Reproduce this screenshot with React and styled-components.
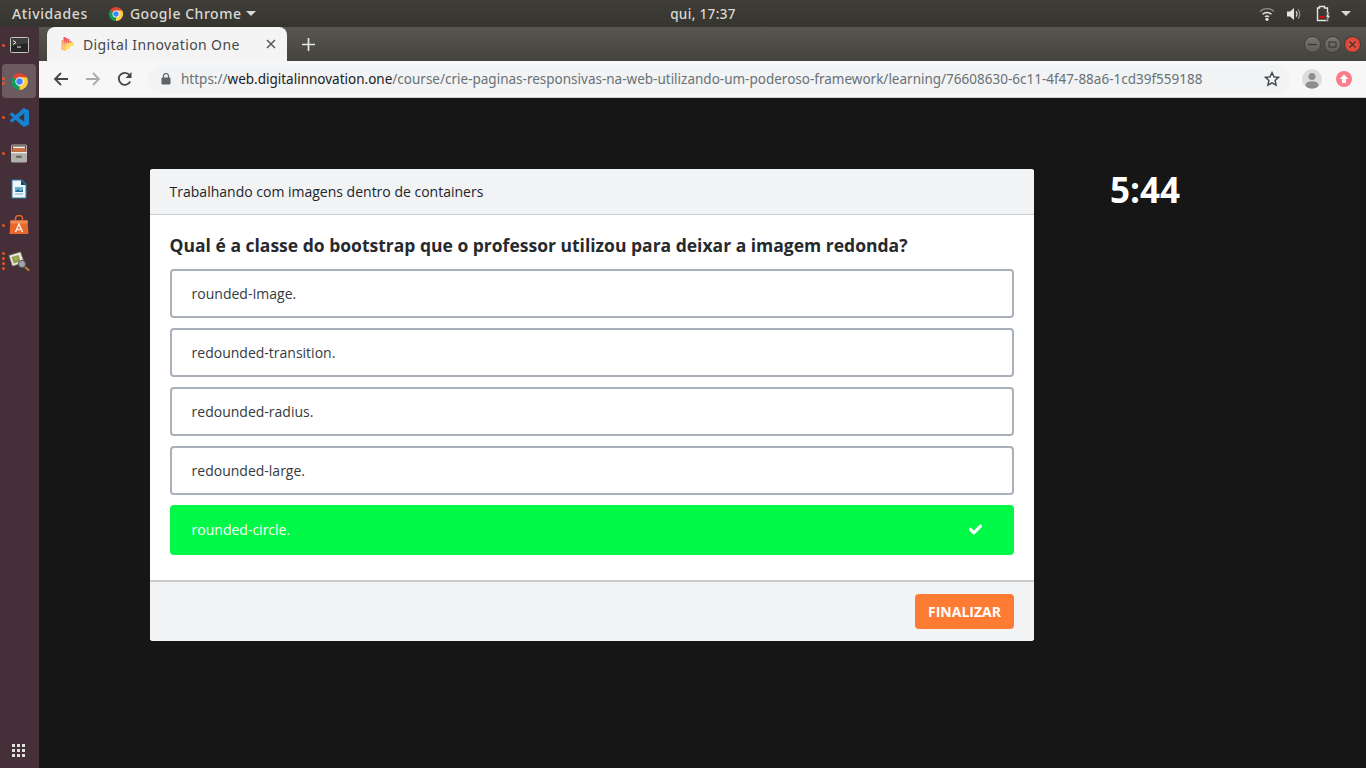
import React from "react";
import styled, { createGlobalStyle } from "styled-components";
import { FaCheck } from "react-icons/fa";

const GlobalStyle = createGlobalStyle`
  html, body {
    margin: 0;
    padding: 0;
    width: 1366px;
    height: 768px;
    overflow: hidden;
    background: #161616;
  }
  * { box-sizing: border-box; }
`;

const Screen = styled.div`
  width: 1366px;
  height: 768px;
  display: flex;
  flex-direction: column;
  font-family: "Open Sans", "Noto Sans", sans-serif;
`;

const TopBar = styled.div`
  height: 27px;
  flex: none;
  display: flex;
  align-items: center;
  background: linear-gradient(#3f3e38, #35342f);
  color: #d9d8d3;
  font-family: "Noto Sans", "Open Sans", sans-serif;
  font-size: 14px;
  font-weight: 500;
  letter-spacing: 0.62px;
  padding: 0 15px 0 12px;
`;

const TopLeft = styled.div`
  width: 651px;
  flex: none;
  display: flex;
  align-items: center;
`;

const AppMenu = styled.div`
  display: flex;
  align-items: center;
  gap: 6px;
  margin-left: 20px;
  letter-spacing: 0.55px;
`;

const Clock = styled.div`
  width: 80px;
  text-align: center;
  font-size: 13.5px;
  letter-spacing: 0.35px;
`;

const TopRight = styled.div`
  flex: 1;
  display: flex;
  align-items: center;
  justify-content: flex-end;
`;

const TrayItem = styled.div`
  display: flex;
  margin-left: ${(p) => p.$gap}px;
`;

const Caret = styled.span`
  display: block;
  width: 0;
  height: 0;
  border-left: 5px solid transparent;
  border-right: 5px solid transparent;
  border-top: 5px solid #d9d8d3;
  margin-left: ${(p) => p.$left || 0}px;
`;

const Body = styled.div`
  flex: 1;
  display: flex;
  min-height: 0;
`;

const Dock = styled.div`
  width: 39px;
  flex: none;
  display: flex;
  flex-direction: column;
  align-items: flex-start;
  background: #45303a;
  padding: 1px 0 0 2px;
`;

const DockItem = styled.div`
  position: relative;
  width: 34px;
  height: 34px;
  margin-bottom: 2px;
  border-radius: 4px;
  display: flex;
  align-items: center;
  justify-content: center;
  background: ${(p) => (p.$active ? "#6b5a5f" : "transparent")};
`;

const Pips = styled.div`
  position: absolute;
  left: 0;
  top: 0;
  bottom: 0;
  display: flex;
  flex-direction: column;
  justify-content: center;
  gap: 2px;
`;

const Pip = styled.span`
  width: 3px;
  height: 3px;
  border-radius: 50%;
  background: #e9541f;
`;

const GridButton = styled.div`
  margin-top: auto;
  margin-bottom: 11px;
  margin-left: 10px;
  display: grid;
  grid-template-columns: repeat(3, 3px);
  gap: 2px;
`;

const GridDot = styled.span`
  width: 3px;
  height: 3px;
  background: #e4e0e0;
`;

const Browser = styled.div`
  flex: 1;
  display: flex;
  flex-direction: column;
  min-width: 0;
`;

const TabStrip = styled.div`
  height: 34px;
  flex: none;
  display: flex;
  align-items: flex-end;
  background: linear-gradient(#575650, #44433d);
  padding: 0 5px 0 8px;
`;

const Tab = styled.div`
  width: 240px;
  height: 34px;
  display: flex;
  align-items: center;
  background: #f4f4f4;
  border-radius: 8px 8px 0 0;
  padding: 0 11px 0 13px;
  color: #45474b;
  font-family: "Noto Sans", sans-serif;
  font-size: 14px;
`;

const TabTitle = styled.span`
  flex: 1;
  margin-left: 8px;
  letter-spacing: 0.38px;
`;

const NewTab = styled.div`
  margin: 0 0 0 15px;
  height: 34px;
  display: flex;
  align-items: center;
`;

const WindowButtons = styled.div`
  margin-left: auto;
  height: 34px;
  display: flex;
  align-items: center;
  gap: 3px;
`;

const WindowButton = styled.div`
  width: 17px;
  height: 17px;
  border-radius: 50%;
  display: flex;
  align-items: center;
  justify-content: center;
  background: ${(p) => (p.$close ? "radial-gradient(circle, #e8594a, #d9382b)" : "linear-gradient(#77766f, #5d5c56)")};
  border: 1px solid #3d3c37;
`;

const Toolbar = styled.div`
  height: 37px;
  flex: none;
  display: flex;
  align-items: center;
  background: #f7f7f7;
  border-bottom: 1px solid #cfcfcf;
  padding: 0 14px 0 14px;
`;

const NavIcon = styled.div`
  width: 16px;
  height: 16px;
  margin-right: ${(p) => p.$gap || 16}px;
  display: flex;
`;

const Omnibox = styled.div`
  width: 1142px;
  height: 29px;
  flex: none;
  display: flex;
  align-items: center;
  background: #f1f3f4;
  border-radius: 14px;
  padding: 0 10px 0 13px;
  font-family: "Noto Sans", sans-serif;
  font-size: 13.5px;
  color: #6a7176;
  white-space: nowrap;
`;

const Url = styled.div`
  flex: 1;
  margin-left: 10px;
`;

const Host = styled.span`
  color: #202124;
`;

const Profile = styled.div`
  width: 20px;
  height: 20px;
  margin-left: 12px;
  border-radius: 50%;
  background: #dcdcdc;
  overflow: hidden;
  display: flex;
`;

const UpdateBadge = styled.div`
  width: 16px;
  height: 16px;
  margin-left: 14px;
  border-radius: 50%;
  background: #fb7c8a;
  display: flex;
  align-items: center;
  justify-content: center;
`;

const Page = styled.div`
  flex: 1;
  display: flex;
  align-items: flex-start;
  background: #161616;
  padding: 71px 0 0 111px;
`;

const Card = styled.div`
  width: 884px;
  height: 472px;
  display: flex;
  flex-direction: column;
  background: #fff;
  border-radius: 3px;
  overflow: hidden;
`;

const CardHeader = styled.div`
  height: 46px;
  flex: none;
  display: flex;
  align-items: center;
  background: #f2f3f5;
  border-bottom: 1px solid #c9ced4;
  padding: 0 20px 0 19.6px;
  color: #212529;
  font-size: 14px;
`;

const CardBody = styled.div`
  flex: 1;
  padding: 18px 20px 0;
`;

const Question = styled.div`
  color: #262a2e;
  font-size: 17.5px;
  font-weight: 700;
  line-height: 24px;
  margin-bottom: 12px;
  margin-left: -0.4px;
`;

const Options = styled.div`
  display: flex;
  flex-direction: column;
  gap: 10px;
`;

const Option = styled.div`
  height: ${(p) => (p.$selected ? 50 : 49)}px;
  display: flex;
  align-items: center;
  justify-content: space-between;
  border: 2px solid ${(p) => (p.$selected ? "#00f947" : "#a8b0b9")};
  border-radius: 4px;
  background: ${(p) => (p.$selected ? "#00f947" : "#fff")};
  color: ${(p) => (p.$selected ? "#fff" : "#343a40")};
  padding: 0 30px ${(p) => (p.$selected ? 2 : 0)}px 19.6px;
  font-size: 14px;
`;

const CardFooter = styled.div`
  height: 61px;
  flex: none;
  display: flex;
  align-items: center;
  justify-content: flex-end;
  background: #f2f3f5;
  border-top: 2px solid #c9cccf;
  padding: 0 20px;
`;

const FinishButton = styled.button`
  width: 99px;
  height: 35px;
  border: none;
  border-radius: 4px;
  background: #fe7b34;
  color: #fff;
  font-family: "Open Sans", sans-serif;
  font-size: 14px;
  font-weight: 700;
  padding: 0;
`;

const Timer = styled.div`
  margin: 0 0 0 76px;
  color: #fff;
  font-size: 35px;
  font-weight: 700;
  line-height: 42px;
`;

const ChromeLogo = ({ size = 16 }) => (
  <svg width={size} height={size} viewBox="0 0 48 48">
    <path d="M24 24 L45 24 A21 21 0 0 0 5.8 13.5 Z" fill="#db4437" />
    <path d="M24 24 L5.8 13.5 A21 21 0 0 0 24 45 Z" fill="#0f9d58" />
    <path d="M24 24 L24 45 A21 21 0 0 0 42.2 13.5 L24 13.5 Z" fill="#ffcd40" />
    <circle cx="24" cy="24" r="10.5" fill="#fff" />
    <circle cx="24" cy="24" r="8.2" fill="#4285f4" />
  </svg>
);

const TerminalIcon = () => (
  <svg width="19" height="16" viewBox="0 0 19 16">
    <rect x="0.5" y="0.5" width="18" height="15" rx="1" fill="#262626" stroke="#c4c4c0" />
    <path d="M1 1h17v5L1 9z" fill="#3d3d3d" />
    <path d="M3 3.5l3 2-3 2" fill="none" stroke="#f0f0f0" strokeWidth="1" />
    <path d="M7 10h4" stroke="#f0f0f0" />
  </svg>
);

const VSCodeIcon = () => (
  <svg width="19" height="19" viewBox="0 0 24 24">
    <path
      d="M23.15 2.587L18.21.21a1.494 1.494 0 0 0-1.705.29l-9.46 8.63-4.12-3.128a.999.999 0 0 0-1.276.057L.327 7.261A1 1 0 0 0 .326 8.74L3.899 12 .326 15.26a1 1 0 0 0 .001 1.479L1.65 17.94a.999.999 0 0 0 1.276.057l4.12-3.128 9.46 8.63a1.492 1.492 0 0 0 1.704.29l4.942-2.377A1.5 1.5 0 0 0 24 20.06V3.939a1.5 1.5 0 0 0-.85-1.352zm-5.146 14.861L10.826 12l7.178-5.448v10.896z"
      fill="#1582d2"
    />
  </svg>
);

const FilesIcon = () => (
  <svg width="18" height="19" viewBox="0 0 18 19">
    <rect x="1" y="0.5" width="16" height="18" rx="1.5" fill="#b0afab" />
    <rect x="2" y="1.5" width="14" height="6" fill="#5a3f36" />
    <rect x="3" y="2.5" width="12" height="2" fill="#f2efe9" />
    <rect x="2.5" y="4.5" width="13" height="3" fill="#d9683a" />
    <rect x="1" y="8" width="16" height="1.2" fill="#ecebe8" />
    <rect x="6" y="11.5" width="6" height="2.5" rx="1" fill="#6d6d69" />
  </svg>
);

const WriterIcon = () => (
  <svg width="16" height="20" viewBox="0 0 16 20">
    <path d="M1 1h10l4 4v14H1z" fill="#eef5f9" stroke="#2f7fa8" />
    <path d="M10 0.5l5.5 5.5h-5.5z" fill="#12506f" />
    <path d="M4 8h8v5H4z" fill="#6fb0cf" />
    <path d="M4 13l3-3 2 2 3-1v2z" fill="#1e6a90" />
    <path d="M4 15h8" stroke="#7fb2cc" />
  </svg>
);

const StoreIcon = () => (
  <svg width="20" height="20" viewBox="0 0 20 20">
    <path d="M1.5 5.5h17l1 13.5H.5z" fill="#e8682c" />
    <path d="M1.5 5.5h17l.3 3H1.2z" fill="#f08a52" />
    <path d="M6.5 6V3.5a3.5 3 0 0 1 7 0V6" fill="none" stroke="#e8682c" strokeWidth="1.5" />
    <path d="M6.5 17l3.5-8 3.5 8M8 14.5h4" fill="none" stroke="#fbe6da" strokeWidth="1.5" />
  </svg>
);

const ViewerIcon = () => (
  <svg width="22" height="21" viewBox="0 0 22 21">
    <path d="M1 4.5l11.5-3.5 3.5 10.5L4.5 15z" fill="#ecead9" stroke="#8d8a76" strokeWidth="0.7" />
    <path d="M3.5 6l7-2 2.2 6.5-7 2z" fill="#8aa05a" />
    <circle cx="7.5" cy="7.5" r="1.2" fill="#e3a53a" />
    <circle cx="14" cy="13" r="3.6" fill="#a3a3aa" stroke="#55555a" />
    <path d="M17 16l4 3.5" stroke="#b5823a" strokeWidth="2" />
  </svg>
);

const WifiIcon = () => (
  <svg width="16" height="14" viewBox="0 0 16 14">
    <path d="M1 4.5a10 10 0 0 1 14 0" fill="none" stroke="#8f8e89" strokeWidth="1.4" />
    <path d="M3.5 7.3a6.5 6.5 0 0 1 9 0M6 9.8a3 3 0 0 1 4 0" fill="none" stroke="#e4e3de" strokeWidth="1.4" />
    <circle cx="8" cy="12.3" r="1.6" fill="#e4e3de" />
  </svg>
);

const VolumeIcon = () => (
  <svg width="16" height="14" viewBox="0 0 16 14">
    <path d="M1 4.5h3L8 1v12L4 9.5H1z" fill="#e4e3de" />
    <path d="M10 4.5a3.5 3.5 0 0 1 0 5" fill="none" stroke="#e4e3de" strokeWidth="1.2" />
    <path d="M12 2.5a6.5 6.5 0 0 1 0 9" fill="none" stroke="#8f8e89" strokeWidth="1.2" />
  </svg>
);

const BatteryIcon = () => (
  <svg width="16" height="17" viewBox="0 0 16 17">
    <path d="M4.5 1.5h5v1.5h3v12.5h-10V3h2z" fill="none" stroke="#e4e3de" strokeWidth="1.4" />
    <rect x="4.5" y="11" width="5" height="2.4" fill="#d10d0d" />
    <path d="M13.5 7l-3 5h2l-1 4 4-5.5h-2l1-3.5z" fill="#e4e3de" stroke="#3a3934" strokeWidth="0.5" />
  </svg>
);

// the favicon is a play triangle built from small squares
const dioCells = [
  [1, 4, "#f4a77f"], [1, 6, "#f6a56e"], [1, 8, "#f8b26a"], [1, 10, "#f8b26a"], [1, 12, "#f8b26a"],
  [3, 1, "#ef4f5a"], [3, 3, "#ee4a5a"], [3, 5, "#f0786a"], [3, 7, "#f6a56e"], [3, 9, "#f8b26a"], [3, 11, "#fad25a"], [3, 13, "#f8c05e"],
  [5, 2, "#ee4a5a"], [5, 4, "#ee5a62"], [5, 6, "#f3875f"], [5, 8, "#fbd95c"], [5, 10, "#fbdd5e"], [5, 12, "#fbdd5e"],
  [7, 3, "#ef5f66"], [7, 5, "#f26a66"], [7, 7, "#fbd95c"], [7, 9, "#fbdd5e"], [7, 11, "#fbe063"],
  [9, 5, "#f27a6e"], [9, 7, "#fbdd5e"], [9, 9, "#fbe063"],
  [11, 6, "#fbdd5e"], [11, 8, "#fbe063"],
];

const DioLogo = () => (
  <svg width="15" height="16" viewBox="0 0 14 16">
    {dioCells.map(([x, y, fill]) => (
      <rect key={x + "-" + y} x={x} y={y} width="2" height="2" fill={fill} />
    ))}
  </svg>
);

const BackIcon = () => (
  <svg width="16" height="16" viewBox="0 0 16 16">
    <path d="M15 8H2M8 2L2 8l6 6" fill="none" stroke="#44474a" strokeWidth="1.8" />
  </svg>
);

const ForwardIcon = () => (
  <svg width="16" height="16" viewBox="0 0 16 16">
    <path d="M1 8h13M8 2l6 6-6 6" fill="none" stroke="#a9abae" strokeWidth="1.8" />
  </svg>
);

const ReloadIcon = () => (
  <svg width="16" height="16" viewBox="0 0 16 16">
    <path d="M13.2 10.5A6 6 0 1 1 12.5 4" fill="none" stroke="#44474a" strokeWidth="1.8" />
    <path d="M14.5 1v6h-6z" fill="#44474a" />
  </svg>
);

const LockIcon = () => (
  <svg width="10" height="12" viewBox="0 0 10 12">
    <rect x="0.5" y="4.5" width="9" height="7" rx="1" fill="#5f6368" />
    <path d="M2.5 5V3a2.5 2.5 0 0 1 5 0v2" fill="none" stroke="#5f6368" strokeWidth="1.2" />
  </svg>
);

const StarIcon = () => (
  <svg width="16" height="16" viewBox="0 0 24 24">
    <path d="M12 2.5l2.9 6.3 6.9.8-5.1 4.7 1.4 6.8-6.1-3.4-6.1 3.4 1.4-6.8-5.1-4.7 6.9-.8z" fill="none" stroke="#45484b" strokeWidth="2.2" />
  </svg>
);

const options = [
  "rounded-Image.",
  "redounded-transition.",
  "redounded-radius.",
  "redounded-large.",
  "rounded-circle.",
];

const dockItems = [
  { icon: <TerminalIcon />, pips: 1 },
  { icon: <ChromeLogo size={19} />, pips: 2, active: true },
  { icon: <VSCodeIcon />, pips: 1 },
  { icon: <FilesIcon />, pips: 1 },
  { icon: <WriterIcon />, pips: 0 },
  { icon: <StoreIcon />, pips: 1 },
  { icon: <ViewerIcon />, pips: 4 },
];

export default function App() {
  return (
    <Screen>
      <GlobalStyle />
      <TopBar>
        <TopLeft>
          Atividades
          <AppMenu>
            <ChromeLogo />
            Google Chrome
            <Caret $left={-2} />
          </AppMenu>
        </TopLeft>
        <Clock>qui, 17:37</Clock>
        <TopRight>
          <TrayItem $gap={0}><WifiIcon /></TrayItem>
          <TrayItem $gap={11}><VolumeIcon /></TrayItem>
          <TrayItem $gap={13}><BatteryIcon /></TrayItem>
          <TrayItem $gap={10}><Caret /></TrayItem>
        </TopRight>
      </TopBar>
      <Body>
        <Dock>
          {dockItems.map((item, i) => (
            <DockItem key={i} $active={item.active}>
              <Pips>
                {Array.from({ length: item.pips }).map((_, j) => (
                  <Pip key={j} />
                ))}
              </Pips>
              {item.icon}
            </DockItem>
          ))}
          <GridButton>
            {Array.from({ length: 9 }).map((_, i) => (
              <GridDot key={i} />
            ))}
          </GridButton>
        </Dock>
        <Browser>
          <TabStrip>
            <Tab>
              <DioLogo />
              <TabTitle>Digital Innovation One</TabTitle>
              <svg width="10" height="10" viewBox="0 0 10 10">
                <path d="M1 1l8 8M9 1L1 9" stroke="#55575a" strokeWidth="1.5" />
              </svg>
            </Tab>
            <NewTab>
              <svg width="13" height="13" viewBox="0 0 13 13">
                <path d="M6.5 0v13M0 6.5h13" stroke="#e8e8e4" strokeWidth="1.7" />
              </svg>
            </NewTab>
            <WindowButtons>
              <WindowButton>
                <svg width="9" height="9" viewBox="0 0 9 9">
                  <path d="M0 4.5h9" stroke="#35342f" strokeWidth="1.2" />
                </svg>
              </WindowButton>
              <WindowButton>
                <svg width="9" height="9" viewBox="0 0 9 9">
                  <rect x="1" y="2" width="7" height="5" fill="none" stroke="#35342f" />
                </svg>
              </WindowButton>
              <WindowButton $close>
                <svg width="9" height="9" viewBox="0 0 9 9">
                  <path d="M1.5 1.5l6 6M7.5 1.5l-6 6" stroke="#35342f" strokeWidth="1.2" />
                </svg>
              </WindowButton>
            </WindowButtons>
          </TabStrip>
          <Toolbar>
            <NavIcon><BackIcon /></NavIcon>
            <NavIcon><ForwardIcon /></NavIcon>
            <NavIcon $gap={15}><ReloadIcon /></NavIcon>
            <Omnibox>
              <LockIcon />
              <Url>
                https://<Host>web.digitalinnovation.one</Host>/course/crie-paginas-responsivas-na-web-utilizando-um-poderoso-framework/learning/76608630-6c11-4f47-88a6-1cd39f559188
              </Url>
              <StarIcon />
            </Omnibox>
            <Profile>
              <svg width="20" height="20" viewBox="0 0 20 20">
                <circle cx="10" cy="7.5" r="3.5" fill="#8d8d8d" />
                <ellipse cx="10" cy="16" rx="6.5" ry="3.8" fill="#8d8d8d" />
              </svg>
            </Profile>
            <UpdateBadge>
              <svg width="10" height="10" viewBox="0 0 10 10">
                <path d="M5 0.5L9.5 5H7v4H3V5H0.5z" fill="#fff" />
              </svg>
            </UpdateBadge>
          </Toolbar>
          <Page>
            <Card>
              <CardHeader>Trabalhando com imagens dentro de containers</CardHeader>
              <CardBody>
                <Question>Qual é a classe do bootstrap que o professor utilizou para deixar a imagem redonda?</Question>
                <Options>
                  {options.map((text, i) => (
                    <Option key={text} $selected={i === 4}>
                      {text}
                      {i === 4 && <FaCheck size={13} color="#fff" stroke="#fff" strokeWidth={30} />}
                    </Option>
                  ))}
                </Options>
              </CardBody>
              <CardFooter>
                <FinishButton>FINALIZAR</FinishButton>
              </CardFooter>
            </Card>
            <Timer>5:44</Timer>
          </Page>
        </Browser>
      </Body>
    </Screen>
  );
}
